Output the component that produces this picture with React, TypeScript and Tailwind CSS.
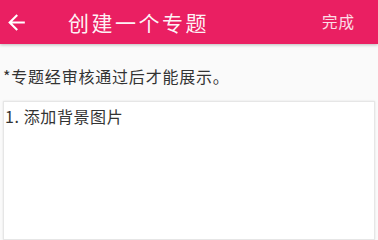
export default function App() {
  return (
    <div
      className="w-[378px] h-[240px] overflow-hidden bg-[#fafafa] flex flex-col"
      style={{ fontFamily: '"Noto Sans CJK SC", "Noto Sans", sans-serif' }}
    >
      <header className="h-[44px] shrink-0 bg-[#ea1f62] flex items-center shadow-[0_1px_3px_rgba(0,0,0,0.25)] relative z-10">
        <button className="ml-[4px] w-[25px] h-[25px] flex items-center justify-center text-white">
          <svg viewBox="0 0 24 24" width="25" height="25" fill="currentColor">
            <path d="M20 11H7.83l5.59-5.59L12 4l-8 8 8 8 1.41-1.41L7.83 13H20v-2z" />
          </svg>
        </button>
        <h1 className="ml-[39px] text-[21px] leading-none tracking-[2.5px] text-white/95">创建一个专题</h1>
        <span className="ml-auto mr-[23px] text-[15.5px] tracking-[1px] text-white/85">完成</span>
      </header>
      <p className="mt-[23px] pl-[3px] text-[16px] leading-[18px] tracking-[0.8px] text-[#333]">
        *专题经审核通过后才能展示。
      </p>
      <div className="mt-[16px] mx-[3px] flex-1 bg-white border border-[#e6e6e6] shadow-[0_0_2px_rgba(0,0,0,0.1)] px-[1px] pt-[5px]">
        <p className="text-[16px] leading-[18px] tracking-[0.6px] text-[#333]">1. 添加背景图片</p>
      </div>
    </div>
  );
}
